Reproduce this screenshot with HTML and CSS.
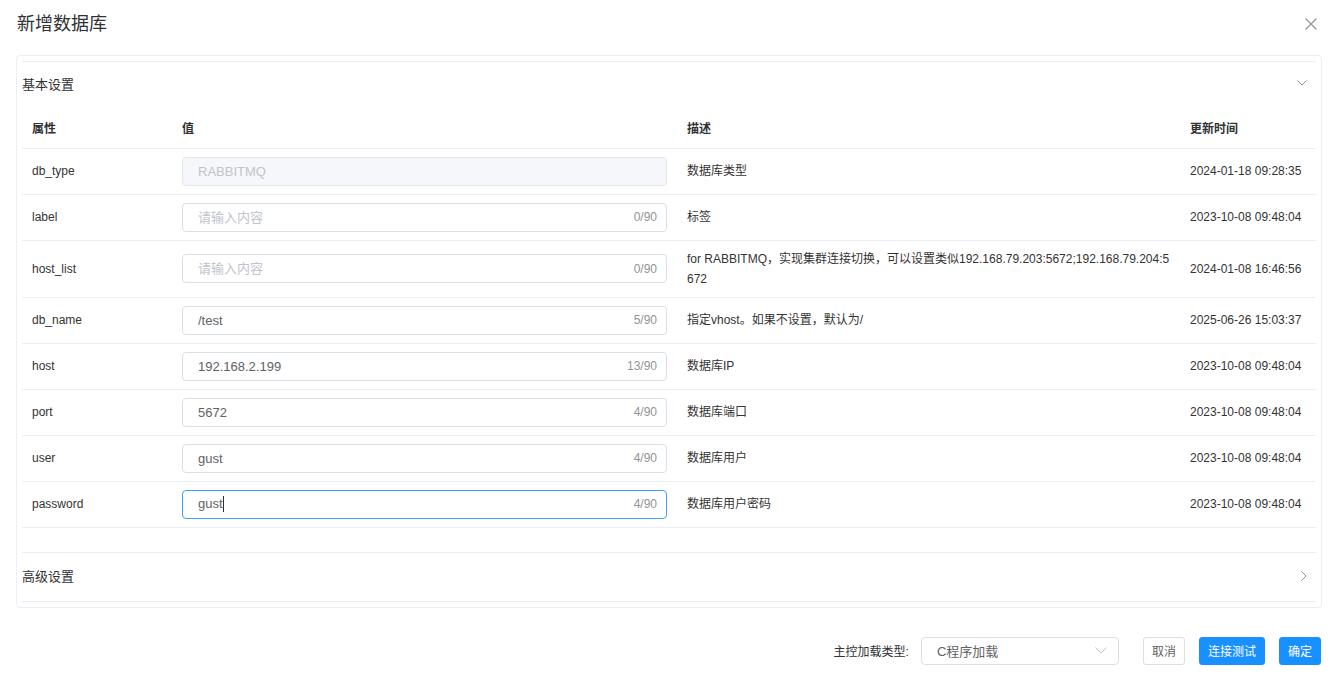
FILE: index.html
```html
<!DOCTYPE html>
<html lang="zh-CN">
<head>
    <meta charset="UTF-8">
    <meta name="viewport" content="width=device-width, initial-scale=1.0">
    <title>新增数据库</title>
    <link rel="stylesheet" href="styles.css">
</head>
<body>
    <div class="dialog">
        <div class="dialog-header">
            <span class="dialog-title">新增数据库</span>
            <button class="close-btn" aria-label="关闭">
                <svg width="12" height="12" viewBox="0 0 12 12"><path d="M0.5 0.5L11.5 11.5M11.5 0.5L0.5 11.5" stroke="#909399" stroke-width="1.2" fill="none"/></svg>
            </button>
        </div>

        <div class="card">
            <div class="collapse">
                <div class="collapse-item is-active">
                    <div class="collapse-header">
                        <span>基本设置</span>
                        <svg class="arrow" width="10" height="6" viewBox="0 0 10 6"><path d="M0.5 0.5L5 5L9.5 0.5" stroke="#909399" stroke-width="1" fill="none"/></svg>
                    </div>
                    <div class="collapse-content">
                        <table class="prop-table">
                            <colgroup>
                                <col style="width: 150px">
                                <col style="width: 505px">
                                <col style="width: 503px">
                                <col style="width: 136px">
                            </colgroup>
                            <thead>
                                <tr>
                                    <th>属性</th>
                                    <th>值</th>
                                    <th>描述</th>
                                    <th>更新时间</th>
                                </tr>
                            </thead>
                            <tbody>
                                <tr>
                                    <td>db_type</td>
                                    <td>
                                        <div class="input is-disabled">
                                            <input type="text" value="RABBITMQ" disabled>
                                        </div>
                                    </td>
                                    <td>数据库类型</td>
                                    <td>2024-01-18 09:28:35</td>
                                </tr>
                                <tr>
                                    <td>label</td>
                                    <td>
                                        <div class="input">
                                            <input type="text" placeholder="请输入内容">
                                            <span class="count">0/90</span>
                                        </div>
                                    </td>
                                    <td>标签</td>
                                    <td>2023-10-08 09:48:04</td>
                                </tr>
                                <tr>
                                    <td>host_list</td>
                                    <td>
                                        <div class="input">
                                            <input type="text" placeholder="请输入内容">
                                            <span class="count">0/90</span>
                                        </div>
                                    </td>
                                    <td>for RABBITMQ，实现集群连接切换，可以设置类似192.168.79.203:5672;192.168.79.204:5672</td>
                                    <td>2024-01-08 16:46:56</td>
                                </tr>
                                <tr>
                                    <td>db_name</td>
                                    <td>
                                        <div class="input">
                                            <input type="text" value="/test">
                                            <span class="count">5/90</span>
                                        </div>
                                    </td>
                                    <td>指定vhost。如果不设置，默认为/</td>
                                    <td>2025-06-26 15:03:37</td>
                                </tr>
                                <tr>
                                    <td>host</td>
                                    <td>
                                        <div class="input">
                                            <input type="text" value="192.168.2.199">
                                            <span class="count">13/90</span>
                                        </div>
                                    </td>
                                    <td>数据库IP</td>
                                    <td>2023-10-08 09:48:04</td>
                                </tr>
                                <tr>
                                    <td>port</td>
                                    <td>
                                        <div class="input">
                                            <input type="text" value="5672">
                                            <span class="count">4/90</span>
                                        </div>
                                    </td>
                                    <td>数据库端口</td>
                                    <td>2023-10-08 09:48:04</td>
                                </tr>
                                <tr>
                                    <td>user</td>
                                    <td>
                                        <div class="input">
                                            <input type="text" value="gust">
                                            <span class="count">4/90</span>
                                        </div>
                                    </td>
                                    <td>数据库用户</td>
                                    <td>2023-10-08 09:48:04</td>
                                </tr>
                                <tr>
                                    <td>password</td>
                                    <td>
                                        <div class="input is-focus">
                                            <span class="fake-value">gust<i class="caret"></i></span>
                                            <span class="count">4/90</span>
                                        </div>
                                    </td>
                                    <td>数据库用户密码</td>
                                    <td>2023-10-08 09:48:04</td>
                                </tr>
                            </tbody>
                        </table>
                    </div>
                </div>
                <div class="collapse-item">
                    <div class="collapse-header">
                        <span>高级设置</span>
                        <svg class="arrow" width="6" height="10" viewBox="0 0 6 10"><path d="M0.5 0.5L5 5L0.5 9.5" stroke="#909399" stroke-width="1" fill="none"/></svg>
                    </div>
                </div>
            </div>
        </div>

        <div class="dialog-footer">
            <span class="footer-label">主控加载类型:</span>
            <div class="select">
                <span>C程序加载</span>
                <svg width="12" height="7" viewBox="0 0 12 7"><path d="M0.5 0.5L6 6L11.5 0.5" stroke="#c0c4cc" stroke-width="1" fill="none"/></svg>
            </div>
            <button class="btn">取消</button>
            <button class="btn btn-primary">连接测试</button>
            <button class="btn btn-primary">确定</button>
        </div>
    </div>
</body>
</html>
```

FILE: styles.css
```css
* {
    box-sizing: border-box;
    margin: 0;
    padding: 0;
}

body {
    font-family: "Liberation Sans", "Noto Sans CJK SC", sans-serif;
    background: #fff;
    color: #303133;
}

.dialog {
    width: 1336px;
    padding: 0 14px 0 16px;
}

.dialog-header {
    height: 55px;
    display: flex;
    align-items: center;
    justify-content: space-between;
    padding-bottom: 7px;
}

.dialog-title {
    font-size: 18px;
    line-height: 24px;
    color: #303133;
    padding-left: 1px;
}

.close-btn {
    background: none;
    border: none;
    width: 12px;
    height: 12px;
    margin-right: 5px;
    display: flex;
    cursor: pointer;
}

.card {
    border: 1px solid #ebeef5;
    border-radius: 4px;
    padding: 5px;
}

.collapse {
    border-top: 1px solid #ebeef5;
}

.collapse-item {
    border-bottom: 1px solid #ebeef5;
}

.collapse-header {
    height: 48px;
    display: flex;
    align-items: center;
    justify-content: space-between;
    font-size: 13px;
    color: #303133;
    padding-right: 9px;
    padding-bottom: 2px;
}

.collapse-item.is-active .collapse-header {
    padding-bottom: 6px;
}

.collapse-content {
    padding-bottom: 24px;
}

.prop-table {
    width: 1294px;
    table-layout: fixed;
    border-collapse: collapse;
    font-size: 12px;
}

.prop-table th {
    text-align: left;
    font-weight: bold;
    color: #303133;
    height: 38px;
    padding: 0 10px;
    line-height: 20px;
    border-bottom: 1px solid #ebeef5;
}

.prop-table td {
    color: #333;
    height: 46px;
    padding: 8px 10px;
    line-height: 20px;
    border-bottom: 1px solid #ebeef5;
    vertical-align: middle;
    word-break: break-all;
}

.input {
    position: relative;
    height: 29px;
    border: 1px solid #dcdfe6;
    border-radius: 4px;
    display: flex;
    align-items: center;
    background: #fff;
}

.input input,
.input .fake-value {
    width: 100%;
    height: 100%;
    border: none;
    outline: none;
    background: transparent;
    padding: 0 44px 0 15px;
    font-family: inherit;
    font-size: 13px;
    color: #606266;
    display: flex;
    align-items: center;
}

.input input::placeholder {
    color: #c0c4cc;
}

.input.is-disabled {
    background: #f5f7fa;
    border-color: #e4e7ed;
}

.input.is-disabled input {
    color: #c0c4cc;
}

.input.is-focus {
    border-color: #409eff;
}

.caret {
    display: inline-block;
    width: 1px;
    height: 16px;
    background: #303133;
}

.count {
    position: absolute;
    right: 9px;
    top: 50%;
    transform: translateY(-50%);
    font-size: 12px;
    color: #909399;
}

.dialog-footer {
    display: flex;
    justify-content: flex-end;
    align-items: center;
    padding-top: 29px;
    padding-right: 1px;
}

.footer-label {
    font-size: 12px;
    color: #303133;
    margin-right: 12px;
}

.select {
    width: 198px;
    height: 28px;
    border: 1px solid #dcdfe6;
    border-radius: 4px;
    display: flex;
    align-items: center;
    justify-content: space-between;
    padding: 0 11px 0 15px;
    font-size: 13px;
    color: #606266;
    margin-right: 24px;
}

.btn {
    height: 28px;
    padding: 0 8px;
    border: 1px solid #dcdfe6;
    border-radius: 3px;
    background: #fff;
    color: #606266;
    font-family: inherit;
    font-size: 12px;
    cursor: pointer;
    margin-left: 14px;
}

.btn:first-of-type {
    margin-left: 0;
}

.btn-primary {
    background: #1890ff;
    border-color: #1890ff;
    color: #fff;
}
```
